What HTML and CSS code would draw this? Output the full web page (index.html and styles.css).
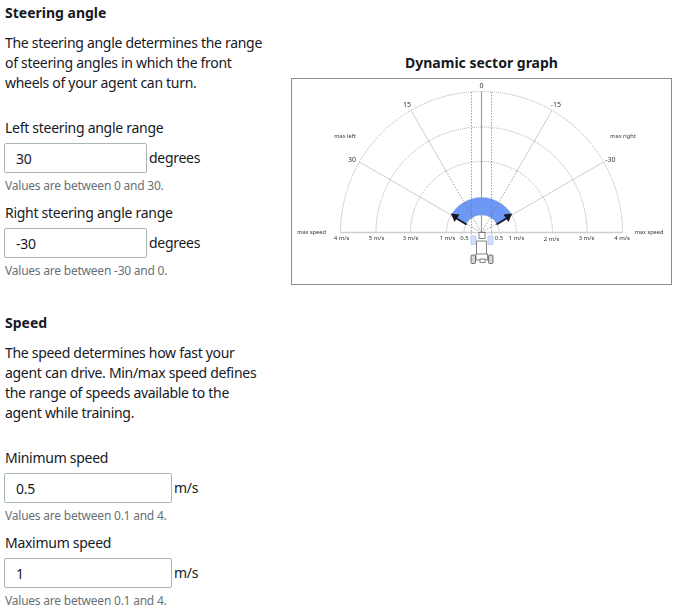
FILE: index.html
```html
<!DOCTYPE html>
<html lang="en">
<head>
<meta charset="utf-8">
<title>Action space</title>
<link rel="stylesheet" href="styles.css">
</head>
<body>
<main class="page">
  <div class="form-col">
    <section class="group">
      <h3 class="heading">Steering angle</h3>
      <p class="desc">The steering angle determines the range of steering angles in which the front wheels of your agent can turn.</p>
      <div class="field">
        <label class="label">Left steering angle range</label>
        <div class="control"><input class="input input-short" value="30"><span class="unit">degrees</span></div>
        <div class="hint">Values are between 0 and 30.</div>
      </div>
      <div class="field">
        <label class="label">Right steering angle range</label>
        <div class="control"><input class="input input-short" value="-30"><span class="unit">degrees</span></div>
        <div class="hint">Values are between -30 and 0.</div>
      </div>
    </section>
    <section class="group">
      <h3 class="heading">Speed</h3>
      <p class="desc">The speed determines how fast your agent can drive. Min/max speed defines the range of speeds available to the agent while training.</p>
      <div class="field">
        <label class="label">Minimum speed</label>
        <div class="control"><input class="input input-long" value="0.5"><span class="unit">m/s</span></div>
        <div class="hint">Values are between 0.1 and 4.</div>
      </div>
      <div class="field">
        <label class="label">Maximum speed</label>
        <div class="control"><input class="input input-long" value="1"><span class="unit">m/s</span></div>
        <div class="hint">Values are between 0.1 and 4.</div>
      </div>
    </section>
  </div>
  <div class="graph-col">
    <h3 class="graph-title">Dynamic sector graph</h3>
    <div class="graph-frame">
      <svg class="graph" width="379" height="204" viewBox="292 79 379 204" xmlns="http://www.w3.org/2000/svg">
        <g class="arc">
          <path d="M340.5 232.5A141 141 0 0 1 622.5 232.5"/>
          <path d="M376 232.5A105.5 105.5 0 0 1 587 232.5"/>
          <path d="M410.5 232.5A71 71 0 0 1 552.5 232.5"/>
          <path d="M446.5 232.5A35 35 0 0 1 516.5 232.5"/>
          <path d="M464 232.5A17.5 17.5 0 0 1 499 232.5"/>
        </g>
        <path class="sector" d="M451.2 215A35 35 0 0 1 511.8 215L496.7 223.8A17.5 17.5 0 0 0 466.3 223.8Z"/>
        <g class="spoke">
          <path d="M359.4 162L451.2 215"/>
          <path d="M603.6 162L511.8 215"/>
          <path d="M411 110.4L446 171"/>
          <path d="M552 110.4L517 171"/>
        </g>
        <g class="spoke-dash">
          <path d="M446 171L481.5 232.5"/>
          <path d="M517 171L481.5 232.5"/>
          <path d="M451.2 215L481.5 232.5"/>
          <path d="M511.8 215L481.5 232.5"/>
          <path d="M471.5 92V240"/>
          <path d="M491.5 92V240"/>
        </g>
        <path class="axis-v" d="M481.5 91.5V232.5"/>
        <path class="axis-h" d="M340.5 232.5H622.5"/>
        <g class="arrow">
          <path d="M466.5 224.5L455 217.5"/>
          <path d="M496.5 224.5L508 217.5"/>
        </g>
        <path class="arrow-head" d="M451 213.5L459.5 214.5L454.5 222Z"/>
        <path class="arrow-head" d="M512 213.5L503.5 214.5L508.5 222Z"/>
        <g class="car">
          <rect class="wheel-front" x="471" y="236" width="5" height="8.5"/>
          <rect class="wheel-front" x="488" y="236" width="5" height="8.5"/>
          <rect x="479" y="232.5" width="6" height="6"/>
          <path d="M476.5 241H486.5V256H476.5Z"/>
          <path d="M476 254H487.5V260H476Z"/>
          <rect x="480" y="259" width="5" height="3.5"/>
          <rect class="wheel-rear" x="471" y="255" width="4.5" height="8.5" rx="1"/>
          <rect class="wheel-rear" x="488.5" y="255" width="4.5" height="8.5" rx="1"/>
        </g>
        <g class="tick">
          <text class="tick-angle" x="481.5" y="88" text-anchor="middle">0</text>
          <text class="tick-angle" x="407" y="107" text-anchor="middle">15</text>
          <text class="tick-angle" x="556" y="107" text-anchor="middle">-15</text>
          <text class="tick-angle" x="352" y="162" text-anchor="middle">30</text>
          <text class="tick-angle" x="610.5" y="162" text-anchor="middle">-30</text>
          <text x="341.5" y="239.5" text-anchor="middle">4 m/s</text>
          <text x="376.5" y="239.5" text-anchor="middle">5 m/s</text>
          <text x="410.5" y="239.5" text-anchor="middle">3 m/s</text>
          <text x="447.5" y="239.5" text-anchor="middle">1 m/s</text>
          <text x="464.5" y="239.5" text-anchor="middle">0.5</text>
          <text x="499" y="239.5" text-anchor="middle">0.5</text>
          <text x="516.5" y="239.5" text-anchor="middle">1 m/s</text>
          <text x="551.5" y="240.5" text-anchor="middle">2 m/s</text>
          <text x="586.5" y="239.5" text-anchor="middle">3 m/s</text>
          <text x="622" y="239.5" text-anchor="middle">4 m/s</text>
        </g>
        <g class="note">
          <text x="345" y="138" text-anchor="middle">max left</text>
          <text x="623" y="138" text-anchor="middle">max right</text>
          <text x="311.5" y="234" text-anchor="middle">max speed</text>
          <text x="649" y="234" text-anchor="middle">max speed</text>
        </g>
      </svg>
    </div>
  </div>
</main>
</body>
</html>
```
FILE: styles.css
```css
* { box-sizing: border-box; }
html, body { margin: 0; padding: 0; background: #fff; }
body {
  font-family: "Noto Sans", "Open Sans", sans-serif;
  font-size: 14px;
  line-height: 20px;
  color: #16191f;
}
.page { display: flex; padding: 3px 0 0 5px; width: 676px; }
.form-col { width: 286px; flex: none; }
.group + .group { margin-top: 32px; }
.heading { margin: 0; font-size: 14px; line-height: 20px; font-weight: 700; }
.desc { margin: 10px 0 25px; width: 262px; letter-spacing: -.3px; }
.field + .field { margin-top: 7px; }
.label { display: block; letter-spacing: -.28px; }
.control { display: flex; align-items: center; margin: 5px 0 0 -1px; }
.input {
  height: 30px;
  padding: 0 11px;
  border: 1px solid #aab7b8;
  border-radius: 2px;
  font: inherit;
  letter-spacing: -.2px;
  color: #16191f;
  background: #fff;
  outline: none;
}
.input-short { width: 143px; }
.input-long { width: 168px; }
.unit { margin-left: 2px; letter-spacing: -.28px; }
.hint { margin-top: 3px; font-size: 12px; line-height: 20px; letter-spacing: -.22px; color: #687078; }
.graph-col { width: 381px; flex: none; margin-top: 49px; }
.graph-title { margin: 0 0 5px; text-align: center; font-size: 14px; line-height: 21px; font-weight: 700; }
.graph-frame { height: 207px; border: 1px solid #8c8c8c; }
.graph { display: block; filter: blur(.35px); }
.arc path { fill: none; stroke: #a8a8a8; stroke-width: 1; stroke-dasharray: 1 1; }
.sector { fill: #6e98f5; }
.spoke path { fill: none; stroke: #ababab; stroke-width: .6; }
.spoke-dash path { fill: none; stroke: #777; stroke-width: .7; stroke-dasharray: 1.5 1.5; }
.axis-v { fill: none; stroke: #999; stroke-width: 1.1; }
.axis-h { fill: none; stroke: #cfcfcf; stroke-width: 1.5; }
.arrow path { fill: none; stroke: #16191f; stroke-width: 2; }
.arrow-head { fill: #16191f; }
.car rect, .car path { fill: #fff; stroke: #666; stroke-width: .8; }
.car .wheel-front { fill: #cfdcfb; stroke: #b6c8f5; }
.car .wheel-rear { fill: #d5d5d5; stroke: #555; }
.tick text { font-size: 6px; fill: #333; }
.tick .tick-angle { font-size: 7px; }
.note text { font-size: 5.6px; fill: #333; }
```
